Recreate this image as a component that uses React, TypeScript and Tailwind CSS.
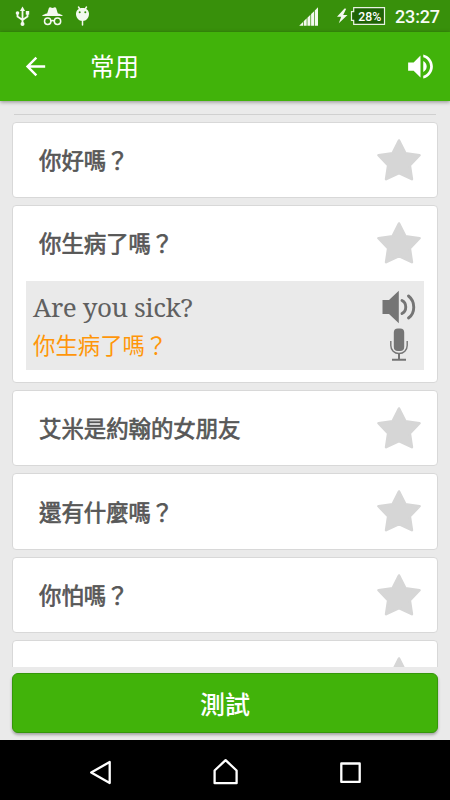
import clsx from "clsx";

type Phrase = {
  id: number;
  text: string;
  translation?: string;
};

const phrases: Phrase[] = [
  { id: 1, text: "你好嗎？" },
  { id: 2, text: "你生病了嗎？", translation: "Are you sick?" },
  { id: 3, text: "艾米是約翰的女朋友" },
  { id: 4, text: "還有什麼嗎？" },
  { id: 5, text: "你怕嗎？" },
  { id: 6, text: "" },
];

function StatusBar() {
  return (
    <div className="h-8 shrink-0 bg-[#38900b] text-white">
      <svg width="450" height="32" viewBox="0 0 450 32" fill="none">
        {/* usb */}
        <g stroke="#f4f9f0" strokeWidth="1.8">
          <path d="M22.5 9v14M17.5 12v4.500l5 3.500M27.500 12v4.500l-5 3.500" />
        </g>
        <g fill="#f4f9f0">
          <path d="M22.500 6.500l2.600 4.500h-5.200z" />
          <circle cx="22.500" cy="24" r="2" />
          <circle cx="17.500" cy="13" r="1.800" />
          <path d="M25.800 11h3.400v3.600h-3.400z" />
        </g>
        {/* incognito */}
        <path
          d="M47.500 12.500l1.300-4.200c.3-1 1.200-1.300 2-.9l1.700.7 1.700-.7c.8-.4 1.700-.1 2 .9l1.300 4.200 .4 1c2 .4 4 1.100 5 2.600H42c1-1.500 3-2.200 5.100-2.600z"
          fill="#f4f9f0"
        />
        <g stroke="#f4f9f0" strokeWidth="1.500">
          <circle cx="47.700" cy="21.300" r="3.200" />
          <circle cx="57.500" cy="21.300" r="3.200" />
          <path d="M50.800 21q1.800-1 3.600 0" />
        </g>
        {/* debug robot */}
        <path d="M78.500 7l2 3M86.500 7l-2 3M82.500 20v5" stroke="#f4f9f0" strokeWidth="1.500" strokeLinecap="round" />
        <path d="M82.500 8c4 0 6.500 2.600 6.500 6s-2.500 7-6.500 7-6.500-3.500-6.500-7 2.500-6 6.500-6z" fill="#f4f9f0" />
        <circle cx="79.700" cy="12.200" r="1" fill="#38900b" />
        <circle cx="85.300" cy="12.200" r="1" fill="#38900b" />
        {/* signal */}
        <path
          d="M299.200 25.700l3.800-3.700v3.700zM303.700 25.700v-4.500l3-2.900v7.400zM307.400 25.700v-8l3-2.900v10.900zM311.100 25.700v-11.600l3-2.900v14.500zM314.800 25.700v-15.200l3.200-3.200v18.400z"
          fill="#f4f9f0"
        />
        {/* charging bolt and battery */}
        <path d="M344.500 8.500l-7.500 8.300h4.200l-2.400 6.400 8.700-8.200h-4.300l3-6.200z" fill="#f4f9f0" />
        <path
          d="M353.700 7.700h30.800v16.600h-30.800v-4h-2.200v-8.600h2.200z"
          fill="#1f6306"
          stroke="#e9f3e4"
          strokeWidth="1.200"
        />
        <text x="358.300" y="20.500" fill="#fff" className="font-['Roboto'] text-[12px] font-medium" textLength="23" lengthAdjust="spacingAndGlyphs">
          28%
        </text>
        <text x="395" y="22.700" fill="#f7fbf4" className="font-['Roboto'] text-[18px] font-medium" textLength="45">
          23:27
        </text>
      </svg>
    </div>
  );
}

function AppBar() {
  return (
    <header className="relative z-10 flex h-[69px] shrink-0 items-center bg-[#41b30a] pr-[13px] pl-[21px] text-white shadow-[0_1px_4px_rgba(0,0,0,0.4)]">
      <svg width="29" height="29" viewBox="0 0 24 24" fill="currentColor">
        <path d="M20 11H7.830l5.590-5.590L12 4l-8 8 8 8 1.410-1.410L7.830 13H20v-2z" />
      </svg>
      <h1 className="ml-10 pb-px text-[24.5px] leading-none">常用</h1>
      <svg className="ml-auto" width="33" height="33" viewBox="0 0 24 24" fill="currentColor">
        <path d="M3 9v6h4l5 5V4L7 9H3zm13.500 3c0-1.770-1.020-3.290-2.500-4.030v8.050c1.480-.73 2.500-2.250 2.500-4.020zM14 3.230v2.060c2.890.86 5 3.540 5 6.710s-2.110 5.850-5 6.710v2.060c4.010-.91 7-4.490 7-8.770s-2.990-7.860-7-8.770z" />
      </svg>
    </header>
  );
}

function Star() {
  return (
    <svg className="mb-px shrink-0" width="46" height="44" viewBox="0 0 46 44">
      <path
        d="M23 2.500L29.300 15.200L43.500 17.200L33.800 27.300L35.900 41.200L23 35L10.100 41.200L12.200 27.300L2.500 17.200L16.700 15.200Z"
        fill="#d6d6d6"
        stroke="#d6d6d6"
        strokeWidth="2.600"
        strokeLinejoin="round"
      />
    </svg>
  );
}

function SpeakerIcon() {
  return (
    <svg width="34" height="34" viewBox="0 0 34 34" fill="none">
      <path d="M0.500 10h6.500l9.800-9.200v32.400L7 24H0.500z" fill="#757575" />
      <path d="M20 10.500c5 2.500 5 10.500 0 13M26.500 6c7 5.500 7 17 0 22" stroke="#757575" strokeWidth="2.900" strokeLinecap="round" />
    </svg>
  );
}

function MicIcon() {
  return (
    <svg width="18" height="34" viewBox="0 0 18 34" fill="none">
      <rect x="3.800" y="0.500" width="10.400" height="22.500" rx="4" fill="#757575" />
      <path d="M0.800 13v4.500c0 4.500 3.500 8 8.200 8s8.200-3.500 8.200-8V13" stroke="#757575" strokeWidth="1.400" />
      <path d="M9 25v6.500M2 31.700h14" stroke="#757575" strokeWidth="2" />
    </svg>
  );
}

function PhraseCard({ phrase }: { phrase: Phrase }) {
  return (
    <article
      className={clsx(
        "shrink-0 rounded-[4px] border border-[#d8d8d8] bg-white",
        phrase.translation ? "h-[178px]" : "h-[76.4px]"
      )}
    >
      <div className="flex h-[75px] items-center justify-between pr-[15px] pl-[26px]">
        <span className="pb-[2px] text-[22.4px] leading-none text-[#575757] [-webkit-text-stroke:0.7px_#575757]">
          {phrase.text}
        </span>
        <Star />
      </div>
      {phrase.translation && (
        <div className="mx-[13px] flex h-[89px] justify-between bg-[#eaeaea] pr-2 pl-[7px]">
          <div className="flex flex-col pt-2">
            <span className="font-['Noto_Serif','Droid_Serif','DejaVu_Serif_Condensed','DejaVu_Serif',serif] text-[26px] leading-9 tracking-[-0.4px] whitespace-nowrap text-[#606060]">
              {phrase.translation}
            </span>
            <span className="text-[22.4px] leading-[38px] text-[#ff9609]">{phrase.text}</span>
          </div>
          <div className="flex flex-col items-center gap-1 pt-[9px]">
            <SpeakerIcon />
            <MicIcon />
          </div>
        </div>
      )}
    </article>
  );
}

function NavBar() {
  return (
    <nav className="h-[60px] shrink-0 bg-black">
      <svg width="450" height="60" viewBox="0 0 450 60" fill="none" stroke="#fff" strokeWidth="2.300" strokeLinejoin="round">
        <path d="M91.200 32.500L109.700 22v21z" />
        <path d="M214.600 43.200V30.500l11-10.300 11 10.300v12.700z" />
        <path d="M341.300 23.500h18.400v18.400h-18.400z" />
      </svg>
    </nav>
  );
}

export default function App() {
  return (
    <div className="flex h-[800px] w-[450px] flex-col overflow-hidden bg-[#eaeaea] font-['Noto_Sans_CJK_TC',sans-serif]">
      <StatusBar />
      <AppBar />
      <main className="flex h-[566px] shrink-0 flex-col gap-[7px] overflow-hidden px-3 pt-[12.6px]">
        <div className="mx-[2px] h-px shrink-0 bg-[#d0d0d0]" />
        {phrases.map((phrase) => (
          <PhraseCard key={phrase.id} phrase={phrase} />
        ))}
      </main>
      <div className="flex grow flex-col px-3 pt-[6px]">
        <button className="h-[60px] rounded-[6px] border border-[#35970a] bg-[#41b30a] text-[25px] leading-none font-medium text-white shadow-[0_2px_3px_rgba(0,0,0,0.3)]">
          測試
        </button>
      </div>
      <NavBar />
    </div>
  );
}
